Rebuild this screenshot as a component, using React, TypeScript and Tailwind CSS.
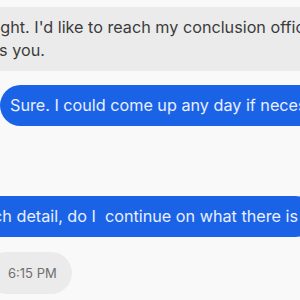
export default function App() {
  return (
    <div className="w-[300px] h-[300px] overflow-hidden bg-[#f9f9f9] font-['Inter',sans-serif]">
      <div className="flex flex-col pt-[7px]">
        <div className="ml-[-22px] w-[520px] bg-[#ebebeb] rounded-[18px] pl-[12px] py-[9px] text-[16.2px] leading-[23px] text-[#3b3b3b] whitespace-pre-line">
          {"right. I'd like to reach my conclusion officially with all the papers\nas you."}
        </div>

        <div className="mt-[14px] flex">
          <div className="shrink-0 bg-[#1b63e6] rounded-[21px] pl-[10px] pr-[16px] py-[9px] text-[16.2px] leading-[23px] text-[#e8efff] whitespace-nowrap">
            Sure. I could come up any day if necessary.
          </div>
        </div>

        <div className="h-[70px]" />

        <div className="flex">
          <div className="shrink-0 ml-[-35px] bg-[#1b63e6] rounded-[21px] pl-[10px] pr-[18px] py-[9px] text-[16.2px] leading-[23px] text-[#e8efff] whitespace-nowrap">
            such detail, do I&nbsp; continue on what there is
          </div>
        </div>

        <div className="mt-[15px] flex">
          <div className="ml-[-14px] bg-[#ebebeb] rounded-[21px] pl-[22px] pr-[15px] py-[11px] text-[13px] leading-[20px] text-[#6f6f6f]">
            6:15 PM
          </div>
        </div>
      </div>
    </div>
  );
}
